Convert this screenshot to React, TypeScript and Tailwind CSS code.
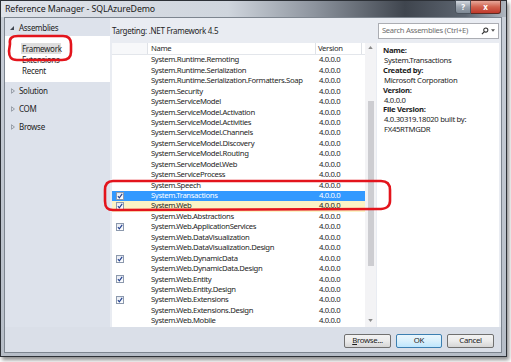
import React from 'react';

const rows: [string, boolean][] = [
  ['System.Runtime.Remoting', false],
  ['System.Runtime.Serialization', false],
  ['System.Runtime.Serialization.Formatters.Soap', false],
  ['System.Security', false],
  ['System.ServiceModel', false],
  ['System.ServiceModel.Activation', false],
  ['System.ServiceModel.Activities', false],
  ['System.ServiceModel.Channels', false],
  ['System.ServiceModel.Discovery', false],
  ['System.ServiceModel.Routing', false],
  ['System.ServiceModel.Web', false],
  ['System.ServiceProcess', false],
  ['System.Speech', false],
  ['System.Transactions', true],
  ['System.Web', true],
  ['System.Web.Abstractions', false],
  ['System.Web.ApplicationServices', true],
  ['System.Web.DataVisualization', false],
  ['System.Web.DataVisualization.Design', false],
  ['System.Web.DynamicData', true],
  ['System.Web.DynamicData.Design', false],
  ['System.Web.Entity', true],
  ['System.Web.Entity.Design', false],
  ['System.Web.Extensions', true],
  ['System.Web.Extensions.Design', false],
  ['System.Web.Mobile', false],
];

const Check = () => (
  <span className="w-[8px] h-[8px] border border-[#8c99ad] bg-[linear-gradient(#e6eaf2,#ffffff)] flex items-center justify-center">
    <svg viewBox="0 0 8 8" className="w-[6px] h-[6px]">
      <path d="M1.2 4.3 L3.1 6.4 L6.9 1.2" stroke="#213f8f" strokeWidth="1.5" fill="none" />
    </svg>
  </span>
);

const Expanded = () => (
  <svg viewBox="0 0 5 5" className="w-[4px] h-[4px]">
    <path d="M5 0 L5 5 L0 5 Z" fill="#404651" />
  </svg>
);

const Collapsed = () => (
  <svg viewBox="0 0 5 7" className="w-[4px] h-[6px]">
    <path d="M0.5 0.7 L4.3 3.5 L0.5 6.3 Z" fill="none" stroke="#7b818b" strokeWidth="0.9" />
  </svg>
);

const Btn = ({ children, primary }: { children: React.ReactNode; primary?: boolean }) => (
  <button
    className={
      primary
        ? 'w-[46px] h-[14px] rounded-[2px] border border-[#3c7fb1] bg-[linear-gradient(#eaf6fd,#d9f0fc_50%,#bee6fd)] text-[7.8px] leading-none text-[#1b1b1b]'
        : 'w-[47px] h-[14px] rounded-[2px] border border-[#707070] bg-[linear-gradient(#f2f2f2,#ebebeb_50%,#d6d6d6)] text-[7.8px] leading-none text-[#1b1b1b]'
    }
  >
    {children}
  </button>
);

export default function App() {
  return (
    <div className="relative w-[511px] h-[362px] bg-white font-['Segoe_UI','Noto_Sans',sans-serif] text-[#1e1e1e] tracking-[-0.3px] overflow-hidden">
      {/* window */}
      <div className="w-[507px] h-[357px] flex flex-col border border-[#2c3036] bg-[linear-gradient(180deg,#c9cfd8,#b6bdc7)] shadow-[2px_3px_4px_rgba(0,0,0,0.45)]">
        {/* title bar */}
        <div className="relative h-[16px] flex items-center pl-[4px] bg-[linear-gradient(90deg,#dfe3ea_0%,#cfd5dd_45%,#8d949e_62%,#3f454e_80%,#5d6570_92%,#b0b7c0_100%)]">
          <span className="text-[8.8px] tracking-[-0.1px] text-[#1a1a1a] leading-none">Reference Manager - SQLAzureDemo</span>
          <div className="absolute right-[5px] top-[-1px] flex">
            <div className="w-[16px] h-[14px] rounded-bl-[3px] border border-[#4b535d] bg-[linear-gradient(#d3d8df,#9aa3ae_50%,#7e8894)] flex items-center justify-center text-[8px] font-bold text-white leading-none">?</div>
            <div className="w-[30px] h-[14px] rounded-br-[3px] border border-l-0 border-[#5a2a22] bg-[linear-gradient(#e7a89a,#d0614d_50%,#c0392b)] flex items-center justify-center text-[8px] font-bold text-white leading-none">x</div>
          </div>
        </div>

        {/* client */}
        <div className="flex-1 ml-[3px] mr-[4px] mb-[3px] border border-[#7d858f] flex flex-col">
          <div className="h-[309px] flex">
            {/* left nav */}
            <div className="w-[105px] bg-[#dde2eb] flex flex-col text-[8px] leading-none">
              <div className="h-[18px] flex items-center gap-[5px] pl-[5px] pt-[1px]">
                <Expanded />
                <span>Assemblies</span>
              </div>
              <div className="h-[46px] bg-white pt-[7px] pl-[16px] flex flex-col">
                <div className="h-[11px] flex items-center">
                  <span className="h-[11px] w-[40px] bg-[#dedede] flex items-center pl-[1px]">Framework</span>
                </div>
                <div className="h-[11px] flex items-center pl-[1px]">Extensions</div>
                <div className="h-[11px] flex items-center pl-[1px]">Recent</div>
              </div>
              {['Solution', 'COM', 'Browse'].map((t) => (
                <div key={t} className="h-[18px] flex items-center gap-[4px] pl-[6px]">
                  <Collapsed />
                  <span>{t}</span>
                </div>
              ))}
            </div>

            {/* main */}
            <div className="flex-1 bg-[#e9ecf2] flex flex-col">
              <div className="h-[25px] flex items-center justify-between pl-[2px] pr-[2px]">
                <span className="text-[8px] leading-none">Targeting: .NET Framework 4.5</span>
                <div className="w-[121px] h-[16px] border border-[#abadb3] bg-white flex items-center pl-[3px] pr-[3px]">
                  <span className="flex-1 text-[7.6px] text-[#6d6d6d] leading-none whitespace-nowrap">Search Assemblies (Ctrl+E)</span>
                  <svg viewBox="0 0 10 10" className="w-[8px] h-[8px]">
                    <circle cx="6" cy="3.8" r="2.6" fill="none" stroke="#333" strokeWidth="1.3" />
                    <path d="M4.2 5.8 L1.2 9" stroke="#333" strokeWidth="1.5" />
                  </svg>
                  <svg viewBox="0 0 6 4" className="w-[4px] h-[3px] ml-[2px]">
                    <path d="M0 0 L6 0 L3 4 Z" fill="#555" />
                  </svg>
                </div>
              </div>

              <div className="flex-1 flex pl-[2px] pr-[2px] gap-[1px]">
                {/* list */}
                <div className="w-[264px] bg-white flex text-[7.7px] tracking-[-0.35px] leading-none">
                  <div className="w-[253px] flex flex-col">
                    <div className="h-[12px] flex border-b border-[#e3e6eb] text-[#2b2b2b]">
                      <div className="w-[36px] border-r border-[#dfe2e7] bg-[#f7f8fa]" />
                      <div className="w-[168px] border-r border-[#dfe2e7] flex items-center pl-[3px]">Name</div>
                      <div className="w-[46px] border-r border-[#dfe2e7] flex items-center pl-[2px]">Version</div>
                    </div>
                    {rows.map(([name, checked], i) => {
                      const sel = i === 13;
                      const hot = i === 14;
                      return (
                        <div
                          key={name}
                          className={
                            'h-[10.44px] flex items-center ' +
                            (sel ? 'bg-[#3399ff] text-white' : hot ? 'bg-[#fbf3c5]' : '')
                          }
                        >
                          <div className="w-[36px] pl-[4px] flex items-center">{checked && <Check />}</div>
                          <div className="w-[168px] pl-[3px] whitespace-nowrap">{name}</div>
                          <div className="w-[46px] pl-[3px]">4.0.0.0</div>
                        </div>
                      );
                    })}
                  </div>
                  {/* scrollbar */}
                  <div className="w-[11px] bg-[#f3f3f5] flex flex-col items-center">
                    <svg viewBox="0 0 6 4" className="w-[5px] h-[3px] mt-[3px]">
                      <path d="M0 4 L6 4 L3 0 Z" fill="#8b8b8b" />
                    </svg>
                    <div className="w-[6px] mt-[52px] h-[165px] bg-[#cdcdd1]" />
                    <div className="flex-1" />
                    <svg viewBox="0 0 6 4" className="w-[5px] h-[3px] mb-[5px]">
                      <path d="M0 0 L6 0 L3 4 Z" fill="#8b8b8b" />
                    </svg>
                  </div>
                </div>

                {/* details */}
                <div className="flex-1 bg-white pt-[3px] pl-[6px] text-[7.7px] leading-[9.9px]">
                  <div className="font-bold">Name:</div>
                  <div className="pl-[1px]">System.Transactions</div>
                  <div className="font-bold">Created by:</div>
                  <div className="pl-[1px]">Microsoft Corporation</div>
                  <div className="font-bold">Version:</div>
                  <div className="pl-[1px]">4.0.0.0</div>
                  <div className="font-bold">File Version:</div>
                  <div className="pl-[1px]">4.0.30319.18020 built by:</div>
                  <div className="pl-[1px]">FX45RTMGDR</div>
                </div>
              </div>
            </div>
          </div>

          {/* button bar */}
          <div className="flex-1 bg-[#dadfe8] flex items-start justify-end gap-[5px] pt-[7px] pr-[7px]">
            <Btn>
              <span className="underline">B</span>rowse...
            </Btn>
            <Btn primary>OK</Btn>
            <Btn>Cancel</Btn>
          </div>
        </div>
      </div>

      {/* red annotations */}
      <svg className="absolute left-0 top-0 pointer-events-none" width="511" height="362" viewBox="0 0 511 362">
        <path
          d="M10 44 C9 38 12 36 18 36 L63 36 C69 36 71 39 71 44 L71 52 C71 57 68 60 62 60 L17 60 C11 60 9 57 9 51 Z"
          fill="none"
          stroke="#e3141c"
          strokeWidth="2.6"
        />
        <path
          d="M113 181 L381 181 C387 181 390 184 390 190 L390 201 C390 207 386 209 378 209 L113 210 C107 210 105 207 105 201 L105 190 C105 184 108 181 113 181 Z"
          fill="none"
          stroke="#e3141c"
          strokeWidth="2.6"
        />
      </svg>
    </div>
  );
}
